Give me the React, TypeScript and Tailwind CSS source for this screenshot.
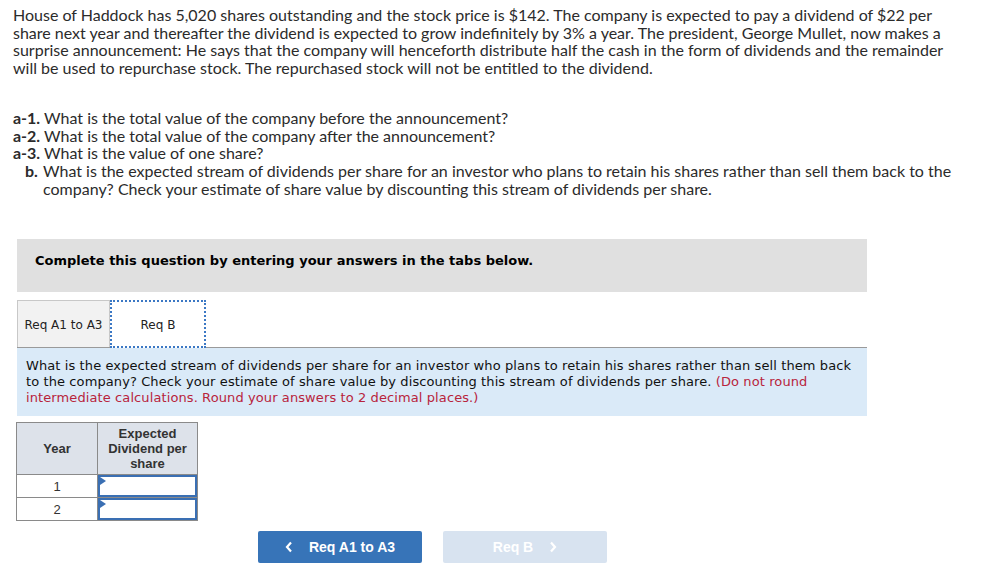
import React from "react";

const Tri = () => (
  <svg className="absolute left-0 top-0" width="6" height="8" viewBox="0 0 6 8">
    <path d="M0 0 L6 4 L0 8 Z" fill="#3a6fb3" />
  </svg>
);

export default function App() {
  return (
    <div className="w-[998px] h-[587px] bg-white text-[#2b2b2b] overflow-hidden">
      <div className="pl-[13px] pr-[40px] pt-[6px] text-[16px] leading-[17.7px] font-['Lato',sans-serif]">
        <p>
          House of Haddock has 5,020 shares outstanding and the stock price is $142. The company is expected to pay a dividend of $22 per share next year and thereafter the dividend is expected to grow indefinitely by 3% a year. The president, George Mullet, now makes a surprise announcement: He says that the company will henceforth distribute half the cash in the form of dividends and the remainder will be used to repurchase stock. The repurchased stock will not be entitled to the dividend.
        </p>
        <div className="mt-[32px]">
          <div><b className="font-bold">a-1.</b> What is the total value of the company before the announcement?</div>
          <div><b className="font-bold">a-2.</b> What is the total value of the company after the announcement?</div>
          <div><b className="font-bold">a-3.</b> What is the value of one share?</div>
          <div className="flex pl-[12px]">
            <b className="font-bold w-[18px] shrink-0">b.</b>
            <span className="pr-[2px]">What is the expected stream of dividends per share for an investor who plans to retain his shares rather than sell them back to the company? Check your estimate of share value by discounting this stream of dividends per share.</span>
          </div>
        </div>
      </div>

      <div className="ml-[17px] w-[850px] mt-[42px] font-['DejaVu_Sans',Verdana,sans-serif]">
        <div className="bg-[#e0e0e0] h-[53px] pt-[14px] pl-[18px] text-[13px] leading-[16px] font-bold text-black">
          Complete this question by entering your answers in the tabs below.
        </div>
        <div className="mt-[9px] flex items-end border-b border-[#9a9a9a] h-[47px]">
          <div className="w-[93px] h-[47px] pt-[2px] bg-[#f2f2f2] border border-[#c8c8c8] border-b-0 flex items-center justify-center text-[12px] text-[#222]">
            Req A1 to A3
          </div>
          <div className="w-[96px] h-[48px] pt-[2px] -mb-px bg-white border-2 border-dotted border-[#3b78c4] flex items-center justify-center text-[12px] text-[#222]">
            Req B
          </div>
        </div>
        <div className="bg-[#daeaf8] px-[9px] pt-[10px] pb-[10px] text-[13px] tracking-[0.1px] leading-[16px] text-[#111]">
          What is the expected stream of dividends per share for an investor who plans to retain his shares rather than sell them back to the company? Check your estimate of share value by discounting this stream of dividends per share.{" "}
          <span className="text-[#b8243c]">(Do not round intermediate calculations. Round your answers to 2 decimal places.)</span>
        </div>
      </div>

      <table className="ml-[16px] mt-[6px] border-collapse font-['Liberation_Sans',Arial,sans-serif] text-[13px] text-[#333]">
        <tbody>
          <tr className="bg-[#dde2ea]">
            <th className="w-[81px] h-[52px] border border-[#8a8a8a] font-bold text-center">Year</th>
            <th className="w-[100px] h-[52px] border border-[#8a8a8a] font-bold text-center leading-[15px]">
              Expected
              <br />
              Dividend per
              <br />
              share
            </th>
          </tr>
          {[1, 2].map((n) => (
            <tr key={n}>
              <td className="h-[23px] border border-[#8a8a8a] text-center">{n}</td>
              <td className="h-[23px] border border-[#8a8a8a] p-0">
                <div className="relative h-[22px] border-2 border-[#3a6fb3] bg-white">
                  <Tri />
                </div>
              </td>
            </tr>
          ))}
        </tbody>
      </table>

      <div className="mt-[10px] ml-[258px] flex gap-[21px] font-['Liberation_Sans',Arial,sans-serif] text-[14px] font-bold text-white">
        <div className="w-[164px] h-[32px] rounded-[2px] bg-[#3774b8] flex items-center justify-center gap-[16px]">
          <svg width="8" height="12" viewBox="0 0 8 12">
            <path d="M6 1.5 L2 6 L6 10.5" stroke="white" strokeWidth="2.2" fill="none" />
          </svg>
          <span>Req A1 to A3</span>
        </div>
        <div className="w-[164px] h-[32px] rounded-[2px] bg-[#d8e3f0] flex items-center justify-center gap-[16px]">
          <span>Req B</span>
          <svg width="8" height="12" viewBox="0 0 8 12">
            <path d="M2 1.5 L6 6 L2 10.5" stroke="white" strokeWidth="2.2" fill="none" />
          </svg>
        </div>
      </div>
    </div>
  );
}
